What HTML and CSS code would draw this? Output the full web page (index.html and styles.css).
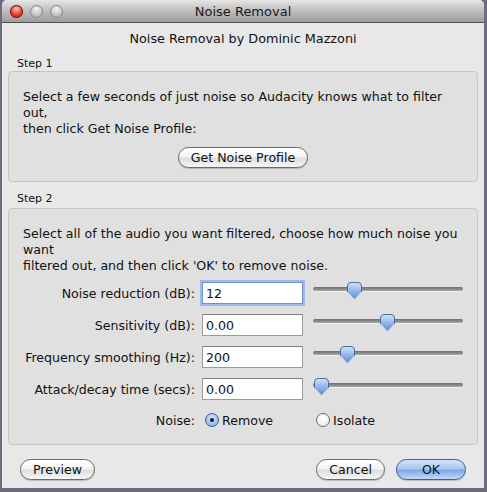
FILE: index.html
```html
<!DOCTYPE html>
<html>
<head>
<meta charset="utf-8">
<title>Noise Removal</title>
<link rel="stylesheet" href="styles.css">
</head>
<body>
<div class="window">
  <div class="titlebar">
    <div class="lights">
      <span class="light red"></span>
      <span class="light"></span>
      <span class="light"></span>
    </div>
    <div class="title">Noise Removal</div>
  </div>
  <div class="content">
    <div class="heading">Noise Removal by Dominic Mazzoni</div>

    <div class="group-label">Step 1</div>
    <div class="group g1">
      <p class="desc">Select a few seconds of just noise so Audacity knows what to filter<br>out,<br>then click Get Noise Profile:</p>
      <div class="center-row"><button class="aqua">Get Noise Profile</button></div>
    </div>

    <div class="group-label">Step 2</div>
    <div class="group g2">
      <p class="desc">Select all of the audio you want filtered, choose how much noise you<br>want<br>filtered out, and then click 'OK' to remove noise.</p>
      <div class="params">
        <label class="plabel">Noise reduction (dB):</label>
        <input class="field focused" type="text" value="12">
        <div class="slider"><span class="track"></span><span class="thumb" style="left:34px"></span></div>

        <label class="plabel">Sensitivity (dB):</label>
        <input class="field" type="text" value="0.00">
        <div class="slider"><span class="track"></span><span class="thumb" style="left:67px"></span></div>

        <label class="plabel">Frequency smoothing (Hz):</label>
        <input class="field" type="text" value="200">
        <div class="slider"><span class="track"></span><span class="thumb" style="left:27px"></span></div>

        <label class="plabel">Attack/decay time (secs):</label>
        <input class="field" type="text" value="0.00">
        <div class="slider"><span class="track"></span><span class="thumb" style="left:1px"></span></div>

        <label class="plabel">Noise:</label>
        <div class="radios">
          <span class="radio on"><span class="dot"></span></span><span class="rtext">Remove</span>
          <span class="radio"></span><span class="rtext">Isolate</span>
        </div>
      </div>
    </div>

    <div class="buttons">
      <button class="aqua">Preview</button>
      <div class="spacer"></div>
      <button class="aqua">Cancel</button>
      <button class="aqua default">OK</button>
    </div>
  </div>
</div>
</body>
</html>
```
FILE: styles.css
```css
html, body {
  margin: 0;
  padding: 0;
  background: #6c6c7e;
  width: 487px;
  height: 492px;
  overflow: hidden;
  font-family: "DejaVu Sans", "Liberation Sans", sans-serif;
  font-size: 12.6px;
  color: #111;
}

.window {
  margin-left: 2px;
  width: 482px;
  height: 488px;
  background: #e8e8e8;
  border-radius: 5px 5px 0 0;
  overflow: hidden;
  display: flex;
  flex-direction: column;
}

.titlebar {
  height: 22px;
  position: relative;
  background: linear-gradient(#e6e6e6, #bdbdbd 50%, #9d9d9d);
  border-bottom: 1px solid #505050;
  display: flex;
  align-items: center;
  justify-content: center;
}

.lights {
  position: absolute;
  left: 8px;
  top: 5px;
  display: flex;
  gap: 7px;
}

.light {
  width: 13px;
  height: 13px;
  border-radius: 50%;
  background: radial-gradient(circle at 50% 30%, #f4f4f4, #c4c4c4 55%, #9c9c9c);
  box-shadow: inset 0 0 0 1px #8c8c8c;
}

.light.red {
  background: radial-gradient(circle at 50% 30%, #ffc0b8, #e03a2a 55%, #9e1a10);
  box-shadow: inset 0 0 0 1px #7a1a12;
}

.title {
  font-size: 13px;
  color: #1a1a1a;
}

.content {
  flex: 1;
  padding: 8px 6px 0 6px;
  display: flex;
  flex-direction: column;
}

.heading {
  text-align: center;
  line-height: 16px;
  font-size: 12.8px;
}

.group-label {
  font-size: 11px;
  line-height: 14px;
  margin: 10px 0 0 9px;
}

.group {
  background: #e0e0e0;
  border: 1px solid #c6c6c6;
  border-radius: 4px;
  padding: 17px 14px 0 14px;
}

.g1 {
  height: 92px;
}

.g2 {
  height: 218px;
  margin-top: 2px;
}

.desc {
  margin: 0;
  line-height: 16px;
}

.center-row {
  display: flex;
  justify-content: center;
  margin-top: 10px;
}

button.aqua {
  font-family: inherit;
  font-size: 12.6px;
  color: #111;
  height: 21px;
  padding: 0 12px;
  border-radius: 11px;
  border: 1px solid #6a6a6a;
  background: linear-gradient(#ffffff, #f4f4f4 45%, #dedede 55%, #f6f6f6);
  box-shadow: 0 1px 1px rgba(0,0,0,0.2);
}

button.aqua.default {
  border-color: #3a5f9a;
  background: linear-gradient(#d3e4fb, #a9c8f1 45%, #7fa9e6 55%, #c0dafc);
  width: 70px;
}

.params {
  display: grid;
  grid-template-columns: 172px 101px 150px;
  column-gap: 7px;
  row-gap: 10px;
  align-items: center;
  margin-top: 8px;
}

.plabel {
  text-align: right;
}

.field {
  font-family: inherit;
  font-size: 12.6px;
  width: 101px;
  height: 22px;
  box-sizing: border-box;
  border: 1px solid #9a9a9a;
  border-top-color: #7e7e7e;
  background: #fff;
  padding: 0 3px;
  margin: 0;
  outline: none;
  color: #111;
}

.field.focused {
  border: 1px solid #6f94c8;
  box-shadow: 0 0 0 2px #9cbbe8;
}

.slider {
  position: relative;
  height: 22px;
  margin-left: 3px;
  width: 150px;
}

.track {
  position: absolute;
  left: 0;
  right: 0;
  top: 5px;
  height: 4px;
  border-radius: 2px;
  background: linear-gradient(#6e6e6e, #a8a8a8);
  box-shadow: 0 1px 0 #f0f0f0;
}

.thumb {
  position: absolute;
  top: 0;
  width: 15px;
  height: 17px;
  background: linear-gradient(#cfe0f9, #8fb4ea 55%, #5b8fd8);
  border: 1px solid #4c6c9c;
  box-sizing: border-box;
  clip-path: polygon(0 0, 100% 0, 100% 55%, 50% 100%, 0 55%);
  border-radius: 4px 4px 0 0;
}

.radios {
  grid-column: 2 / 4;
  display: flex;
  align-items: center;
  height: 20px;
}

.radio {
  width: 14px;
  height: 14px;
  border-radius: 50%;
  border: 1px solid #6a6a6a;
  box-sizing: border-box;
  background: radial-gradient(circle at 50% 35%, #ffffff, #e6e6e6);
  display: flex;
  align-items: center;
  justify-content: center;
  margin-left: 3px;
}

.radio.on {
  border-color: #3e5f94;
  background: radial-gradient(circle at 50% 35%, #d4e5fb, #7fa9e6);
}

.dot {
  width: 4px;
  height: 4px;
  border-radius: 50%;
  background: #1a1a1a;
}

.rtext {
  margin-left: 3px;
  margin-right: 40px;
}

.buttons {
  display: flex;
  align-items: center;
  margin-top: 14px;
  padding: 0 12px;
  gap: 11px;
}

.spacer {
  flex: 1;
}
```
